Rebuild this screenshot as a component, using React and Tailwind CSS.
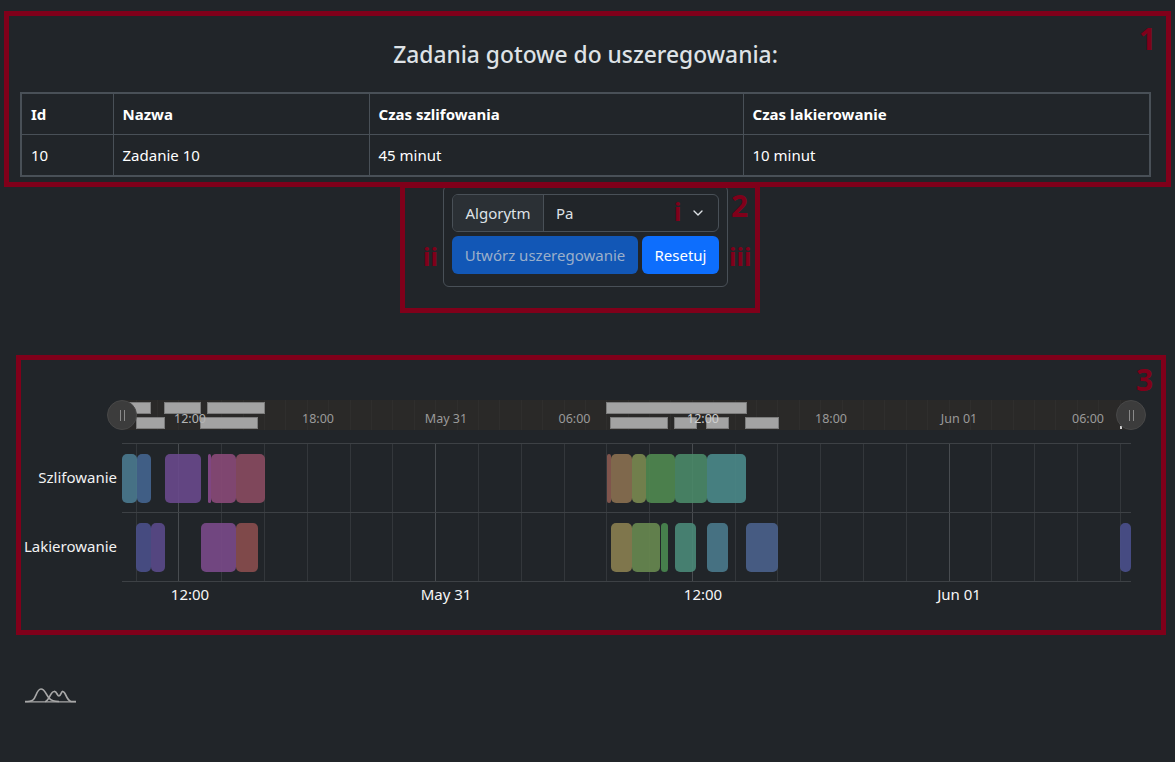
import React from "react";
import { ChevronDown } from "lucide-react";

const row1 = [
  [122, 14.5, "#4a7a8f"], [136.5, 14, "#44658f"], [165, 35.5, "#69498c"], [207.5, 3.5, "#8a4a8c"],
  [211, 25, "#8a4a78"], [236, 29, "#8a4b60"], [607, 3.5, "#8a5a50"], [610.5, 21, "#8a7050"],
  [631.5, 14.5, "#7a8a50"], [646, 28.5, "#508a50"], [674.5, 32.5, "#4a8a68"], [707, 39, "#4a8a8a"],
];
const row2 = [
  [136, 15, "#4a508a"], [151, 14, "#5a4a8a"], [200.5, 35.5, "#7a4a8a"], [236, 22, "#8a4e4e"],
  [610.5, 21, "#8a8050"], [631.5, 28.5, "#688a50"], [660.5, 7, "#4a8a50"], [674.5, 21.5, "#4a8a78"],
  [706.5, 21.5, "#4a7a8c"], [746, 32, "#4a628c"], [1120, 11, "#4a508c"],
];
const miniTop = [[122, 29], [164, 37], [207, 58], [606, 140.5]];
const miniBottom = [[135.5, 29.5], [200, 58], [610, 58], [674, 22.5], [706, 22.5], [745, 33.5]];
const stripLabels = [[190, "12:00", "#b4b4b4"], [318, "18:00", "#9a9a9a"], [446, "May 31", "#9a9a9a"], [574.5, "06:00", "#9a9a9a"], [703, "12:00", "#cfcfcf"], [831, "18:00", "#9a9a9a"], [959, "Jun 01", "#9a9a9a"], [1088, "06:00", "#9a9a9a"]];
const axisLabels = [[190, "12:00"], [446, "May 31"], [703, "12:00"], [959, "Jun 01"]];
const ticks = Array.from({ length: 24 }, (_, i) => 135.7 + i * 42.78);
const miniTicks = Array.from({ length: 47 }, (_, i) => 135.7 + i * 21.39);
const X0 = 122;

function Bars({ data }) {
  return data.map(([x, w, c]) => (
    <div key={x} className="absolute top-[10px] h-[49px] rounded-[5px] opacity-90" style={{ left: x - X0, width: w, background: c }} />
  ));
}

function Handle({ className }) {
  return (
    <div className={"absolute top-0 flex h-[30px] w-[30px] items-center justify-center gap-[3px] rounded-full border border-[#484848] bg-[#3c3c3c] " + className}>
      <span className="h-[11px] w-px bg-[#8a8a8a]" />
      <span className="h-[11px] w-px bg-[#8a8a8a]" />
    </div>
  );
}

function Note({ className, children }) {
  return <span className={"absolute font-bold leading-none text-[#80001a] " + className}>{children}</span>;
}

export default function App() {
  return (
    <div className="relative min-h-[762px] overflow-hidden bg-[#212529] pl-5 pr-6 text-[15px] text-[#dee2e6] [font-family:'Noto_Sans',sans-serif]">
      <h1 className="flex h-[92px] items-center justify-center pt-[18px] text-[22.8px] font-medium text-[#dee2e6]">Zadania gotowe do uszeregowania:</h1>

      <table className="w-[1131px] table-fixed border-collapse border-2 border-[#495057] text-[#fff]">
        <thead>
          <tr className="h-[41px] border-b border-[#495057] text-left">
            <th className="w-[92px] border-r border-[#495057] px-[9px] font-bold">Id</th>
            <th className="w-[256px] border-r border-[#495057] px-[9px] font-bold">Nazwa</th>
            <th className="w-[374px] border-r border-[#495057] px-[9px] font-bold">Czas szlifowania</th>
            <th className="px-[9px] font-bold">Czas lakierowanie</th>
          </tr>
        </thead>
        <tbody>
          <tr className="h-[42px]">
            <td className="border-r border-[#495057] px-[9px]">10</td>
            <td className="border-r border-[#495057] px-[9px]">Zadanie 10</td>
            <td className="border-r border-[#495057] px-[9px]">45 minut</td>
            <td className="px-[9px]"><span>10 minut</span></td>
          </tr>
        </tbody>
      </table>

      <div className="mx-auto mt-[8px] flex w-[285px] flex-col gap-1 rounded-md border border-[#495057] px-2 pb-3 pt-2">
        <div className="flex h-[38px] overflow-hidden rounded-md border border-[#495057]">
          <div className="flex w-[91px] items-center justify-center border-r border-[#495057] bg-[#2b3035] text-[#dee2e6]">Algorytm</div>
          <div className="flex flex-1 items-center justify-between pl-3 pr-[12px]">
            <span>Pa</span>
            <ChevronDown size={16} strokeWidth={2} className="text-[#dee2e6]" />
          </div>
        </div>
        <div className="flex h-[38px] gap-1">
          <button className="w-[186px] rounded-md bg-[#1257b6] text-[#9bafca]">Utwórz uszeregowanie</button>
          <button className="flex-1 rounded-md bg-[#0d6efd] text-white">Resetuj</button>
        </div>
      </div>

      <div className="mt-[113px]">
        <div className="relative ml-[102px] h-[30px] w-[1009px] bg-[#2a2928]">
          {miniTicks.map((x) => (
            <span key={x} className="absolute inset-y-0 w-px bg-[#2f2e2d]" style={{ left: x - X0 }} />
          ))}
          {miniTop.map(([x, w]) => (
            <div key={x} className="absolute top-[1.5px] h-[12px] border border-[#7c7c7c] bg-[#a3a3a3]" style={{ left: x - X0, width: w }} />
          ))}
          {miniBottom.map(([x, w]) => (
            <div key={x} className="absolute top-[16.5px] h-[12px] border border-[#7c7c7c] bg-[#a3a3a3]" style={{ left: x - X0, width: w }} />
          ))}
          {stripLabels.map(([x, t, c]) => (
            <span key={x} className="absolute top-[10px] -translate-x-1/2 text-[12.5px] leading-[18px]" style={{ left: x - X0, color: c }}>{t}</span>
          ))}
          <span className="absolute left-[998px] top-[26px] h-[3px] w-[2px] bg-[#cfcfcf]" />
          <Handle className="-left-[15px]" />
          <Handle className="-right-[15px]" />
        </div>

        <div className="mt-[13px] flex">
          <div className="w-[97px] text-right text-[15px] text-[#f2f2f2]">
            <div className="flex h-[69px] items-center justify-end">Szlifowanie</div>
            <div className="flex h-[69px] items-center justify-end">Lakierowanie</div>
          </div>
          <div className="relative ml-[5px] w-[1009px] border-b border-[#3d4145]">
            {ticks.map((x, i) => (
              <span key={x} className={"absolute inset-y-0 w-px " + (i % 6 === 1 ? "bg-[#484c50]" : "bg-[#33373b]")} style={{ left: x - X0 }} />
            ))}
            <div className="relative h-[69px] border-t border-[#3d4145]"><Bars data={row1} /></div>
            <div className="relative h-[69px] border-t border-[#3d4145]"><Bars data={row2} /></div>
            {axisLabels.map(([x, t]) => (
              <span key={x} className="absolute top-[141px] -translate-x-1/2 text-[15px] leading-[20px] text-[#f6f6f6]" style={{ left: x - X0 }}>{t}</span>
            ))}
          </div>
        </div>
      </div>

      <svg className="absolute left-[25px] top-[687px]" width="52" height="17" viewBox="0 0 52 17" fill="none" stroke="#a8a8a8" strokeWidth="1.7">
        <path d="M0 14.5 C8 14.5 9 13 11 8 C13 3 14 2 16 2 C20 2 21 8 24 11 C26 13.5 30 14.5 34 14.5" />
        <path d="M20 14.5 C24 14.5 25 5 29 4.5 C32 4 32 9 34 9 C36 9 36 4 38 4.5 C41 5 41 13 46 14.5 L51 14.5" />
        <path d="M0 14.8 H51" strokeWidth="1.2" />
      </svg>

      <div className="pointer-events-none absolute left-[4px] top-[11px] h-[176px] w-[1167px] border-[5px] border-[#80001a]" />
      <div className="pointer-events-none absolute left-[400px] top-[183px] h-[130px] w-[360px] border-[5px] border-[#80001a]" />
      <div className="pointer-events-none absolute left-[16px] top-[355px] h-[280px] w-[1150px] border-[5px] border-[#80001a]" />
      <Note className="left-[1139px] top-[24px] text-[30px]">1</Note>
      <Note className="left-[731px] top-[191px] text-[30px]">2</Note>
      <Note className="left-[1136px] top-[365px] text-[30px]">3</Note>
      <Note className="left-[674px] top-[199px] text-[25px]">i</Note>
      <Note className="left-[423px] top-[244px] text-[25px]">ii</Note>
      <Note className="left-[729px] top-[244px] text-[25px]">iii</Note>
    </div>
  );
}
